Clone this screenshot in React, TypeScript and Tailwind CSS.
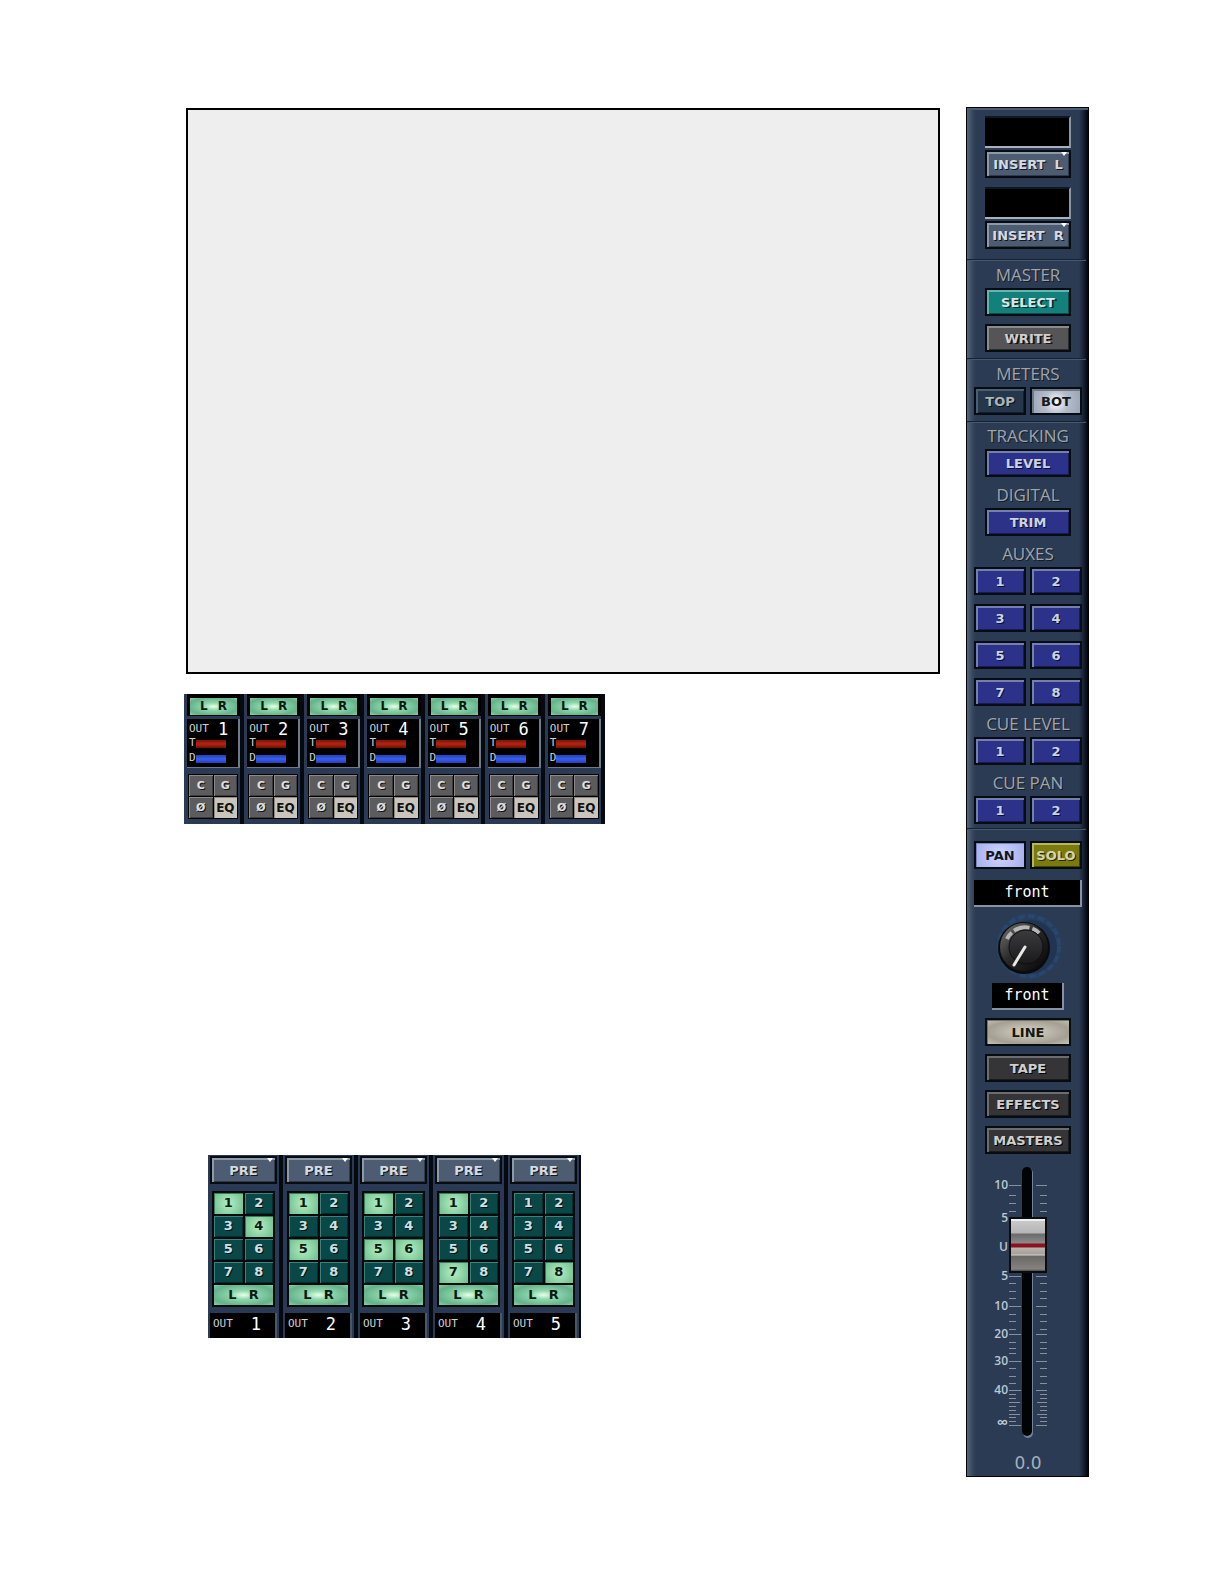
import type { ReactNode } from 'react';

const tones = {
  steel:
    'bg-[#4d5c70] text-[#d5dae0] shadow-[inset_2px_2px_0_#8d99a8,inset_-1px_-1px_0_#2f3a4a] [text-shadow:1px_1px_0_#10161f]',
  teal: 'bg-[#13807c] text-[#d8e6e4] shadow-[inset_2px_2px_0_#63b5ad,inset_-1px_-1px_0_#0a4c4a] [text-shadow:2px_1px_0_#06302f]',
  gray: 'bg-[#555557] text-[#cfcfcf] shadow-[inset_2px_2px_0_#8b8b8b,inset_-1px_-1px_0_#2c2c2c] [text-shadow:2px_1px_0_#151515]',
  navy: 'bg-[#26374b] text-[#aab4bb] shadow-[inset_2px_2px_0_#4b6075,inset_-1px_-1px_0_#151f2c] [text-shadow:1px_1px_0_#0a0f16]',
  silver:
    'bg-[radial-gradient(circle_at_50%_55%,#ffffff,#b4bccb_45%,#98a2b4)] text-[#15181d] shadow-[inset_2px_2px_0_#6d7888]',
  blue: 'bg-[#2c3189] text-[#ccd3e0] shadow-[inset_2px_2px_0_#7380ab,inset_-1px_-1px_0_#181a52] [text-shadow:1px_1px_0_#0b0d33]',
  lilac: 'bg-[radial-gradient(circle,#cfd6ff,#a5aeec)] text-[#14161f] shadow-[inset_1px_1px_0_#7a83b8]',
  olive:
    'bg-[#7b7b0b] text-[#d3d3b4] shadow-[inset_2px_2px_0_#b5b660,inset_-1px_-1px_0_#454503] [text-shadow:1px_1px_0_#26260a]',
  sand: 'bg-[radial-gradient(ellipse_at_50%_50%,#d8d4c6,#a39f93_70%,#c6c2b5)] text-[#17170f] shadow-[inset_1px_1px_0_#77746a]',
  dark: 'bg-[#353537] text-[#cfcfcf] shadow-[inset_2px_2px_0_#6b6d70,inset_-1px_-1px_0_#1a1a1a] [text-shadow:1px_1px_0_#000]',
};

type Tone = keyof typeof tones;

function StripButton({ tone, children, arrow }: { tone: Tone; children: ReactNode; arrow?: boolean }) {
  return (
    <button
      type="button"
      className={`relative h-7 w-full border-2 border-[#070b12] text-[13px] leading-[25px] font-bold whitespace-pre ${tones[tone]}`}
    >
      {children}
      {arrow && (
        <span className="absolute top-0 right-0.5 border-x-[3px] border-t-4 border-x-transparent border-t-white" />
      )}
    </button>
  );
}

function Wide({ children }: { children: ReactNode }) {
  return <div className="mx-[11px] flex flex-col">{children}</div>;
}

function Pair({ children }: { children: ReactNode }) {
  return <div className="grid grid-cols-2 gap-1">{children}</div>;
}

function Heading({ children }: { children: ReactNode }) {
  return (
    <h2 className="h-[22px] text-center font-['Open_Sans',sans-serif] text-[17px] leading-[18px] whitespace-nowrap text-[#a0a5aa] [text-shadow:1px_1px_0_#141c28]">
      {children}
    </h2>
  );
}

function Divider() {
  return <div className="-mr-1 -ml-[7px] h-0.5 border-t border-b border-t-[#172231] border-b-[#46586d]" />;
}

function InsertSlot() {
  return <div className="mb-0.5 h-8 border-t-2 border-r-2 border-b-2 border-t-[#101722] border-r-[#8b96a5] border-b-[#a9b1bc] bg-black" />;
}

function Knob() {
  return (
    <div className="relative mx-auto mt-[5px] size-[70px]">
      <svg viewBox="0 0 70 70" className="size-full">
        <defs>
          <linearGradient id="knobRim" x1="0" y1="0" x2="1" y2="1">
            <stop offset="0" stopColor="#777" />
            <stop offset="0.45" stopColor="#2a2a2a" />
            <stop offset="1" stopColor="#050505" />
          </linearGradient>
          <linearGradient id="knobCap" x1="0" y1="0" x2="0" y2="1">
            <stop offset="0" stopColor="#3b3b3d" />
            <stop offset="1" stopColor="#1a1a1b" />
          </linearGradient>
        </defs>
        <circle cx="36" cy="34" r="33" fill="#27405f" opacity="0.7" />
        <circle cx="36" cy="34" r="30" fill="none" stroke="#2c4a75" strokeWidth="4" strokeDasharray="7 3" opacity="0.7" />
        <circle cx="37" cy="35" r="27" fill="#22334d" opacity="0.8" />
        <circle cx="31" cy="36" r="26" fill="#0a0b0d" />
        <circle cx="31" cy="35" r="24" fill="url(#knobRim)" />
        <path d="M14 27a20 20 0 0 1 33-5" fill="none" stroke="#b5b5b5" strokeWidth="4" strokeDasharray="8 3 16 3" />
        <circle cx="33" cy="35" r="17" fill="url(#knobCap)" stroke="#0d0d0d" strokeWidth="1" />
        <path d="M32 35L21 53" stroke="#e9e9e9" strokeWidth="3" strokeLinecap="round" />
      </svg>
      <input
        type="range"
        aria-label="Pan position"
        min={-100}
        max={100}
        defaultValue={-60}
        className="absolute inset-0 size-full opacity-0"
      />
    </div>
  );
}

const majorTicks = [18, 109, 139, 167, 194, 223, 258];
const minorTicks = [28, 36, 44, 116, 124, 131, 147, 154, 162, 175, 181, 186, 201, 209, 216, 227, 231, 239, 243, 250, 254];
const midTicks = [235, 247];

const scaleLabels = [
  { text: '10', y: 18 },
  { text: '5', y: 51 },
  { text: 'U', y: 80 },
  { text: '5', y: 109 },
  { text: '10', y: 139 },
  { text: '20', y: 167 },
  { text: '30', y: 194 },
  { text: '40', y: 223 },
  { text: '∞', y: 257 },
];

function Fader() {
  return (
    <div className="relative mt-[13px] h-[271px]">
      <svg viewBox="0 0 108 271" className="h-full w-full">
        <g stroke="#84909a" strokeWidth="1" shapeRendering="crispEdges">
          {majorTicks.map((y) => (
            <path key={y} d={`M35 ${y + 0.5}H47M62 ${y + 0.5}H73`} />
          ))}
          {midTicks.map((y) => (
            <path key={y} d={`M35 ${y + 0.5}H46M63 ${y + 0.5}H73`} />
          ))}
          {minorTicks.map((y) => (
            <path key={y} d={`M35 ${y + 0.5}H42M66 ${y + 0.5}H73`} />
          ))}
        </g>
        <g className="fill-[#bcc8d2] text-[12px] font-semibold" fontFamily="Open Sans, sans-serif" textAnchor="end">
          {scaleLabels.map(({ text, y }) => (
            <text key={y} x="34" y={y + 4} className={text === '∞' ? 'text-base' : undefined}>
              {text}
            </text>
          ))}
        </g>
        <rect x="49" y="1" width="10" height="270" rx="5" fill="#73839a" />
        <rect x="48" y="0" width="10" height="269" rx="5" fill="#020305" />
      </svg>
      <input
        type="range"
        aria-label="Master level"
        min={0}
        max={215}
        defaultValue={165}
        className="absolute top-0 left-[35px] h-full w-[38px] appearance-none bg-transparent [direction:rtl] [writing-mode:vertical-lr] [&::-webkit-slider-thumb]:h-14 [&::-webkit-slider-thumb]:w-[38px] [&::-webkit-slider-thumb]:appearance-none [&::-webkit-slider-thumb]:border-2 [&::-webkit-slider-thumb]:border-[#0b0c0e] [&::-webkit-slider-thumb]:bg-[linear-gradient(#efefef_0_2px,#c9c9c9_2px,#b5b5b5_14px,#6b6b6b_15px,#8a8a8a_24px,#8f1020_25px_28px,#b9b5ac_29px,#a5a19a_35px,#d5d5d5_36px,#6a6865_37px,#858380_50px,#4a4a4a_52px)]"
      />
    </div>
  );
}

function Readout({ className, children }: { className: string; children: ReactNode }) {
  return (
    <p
      className={`h-[27px] border-r-2 border-b-2 border-[#8792a3] bg-black text-center font-['DejaVu_Sans_Mono',monospace] text-[15px] leading-6 text-white ${className}`}
    >
      {children}
    </p>
  );
}

function MasterStrip() {
  return (
    <aside className="w-[123px] shrink-0 border border-black bg-[linear-gradient(90deg,#55677b_0,#33445c_6px,#2b3b54_9px,#2b3b54_112px,#141e2f_117px,#02040a_121px)] pt-2 pr-[6px] pb-0.5 pl-[7px] shadow-[inset_0_2px_0_#4b5d73]">
      <Wide>
        <InsertSlot />
        <StripButton tone="steel" arrow>{'INSERT  L'}</StripButton>
        <div className="h-[9px]" />
        <InsertSlot />
        <StripButton tone="steel" arrow>{'INSERT  R'}</StripButton>
      </Wide>
      <div className="h-2.5" />
      <Divider />

      <div className="pt-[5px] pb-1.5">
        <Heading>MASTER</Heading>
        <div className="mx-[11px] flex flex-col gap-2">
          <StripButton tone="teal">SELECT</StripButton>
          <StripButton tone="gray">WRITE</StripButton>
        </div>
      </div>
      <Divider />

      <div className="pt-[5px] pb-1.5">
        <Heading>METERS</Heading>
        <Pair>
          <StripButton tone="navy">TOP</StripButton>
          <StripButton tone="silver">BOT</StripButton>
        </Pair>
      </div>
      <Divider />

      <div className="flex flex-col gap-[9px] pt-1 pb-1">
        <div>
          <Heading>TRACKING</Heading>
          <Wide>
            <StripButton tone="blue">LEVEL</StripButton>
          </Wide>
        </div>
        <div>
          <Heading>DIGITAL</Heading>
          <Wide>
            <StripButton tone="blue">TRIM</StripButton>
          </Wide>
        </div>
        <div>
          <Heading>AUXES</Heading>
          <div className="grid grid-cols-2 gap-x-1 gap-y-[9px]">
            {[1, 2, 3, 4, 5, 6, 7, 8].map((n) => (
              <StripButton key={n} tone="blue">{n}</StripButton>
            ))}
          </div>
        </div>
        {['CUE LEVEL', 'CUE PAN'].map((name) => (
          <div key={name}>
            <Heading>{name}</Heading>
            <Pair>
              <StripButton tone="blue">1</StripButton>
              <StripButton tone="blue">2</StripButton>
            </Pair>
          </div>
        ))}
      </div>
      <Divider />

      <div className="pt-[11px]">
        <Pair>
          <StripButton tone="lilac">PAN</StripButton>
          <StripButton tone="olive">SOLO</StripButton>
        </Pair>
        <Readout className="mt-[11px]">front</Readout>
        <Knob />
        <Readout className="mx-[18px] mt-px">front</Readout>
        <div className="mx-[11px] mt-2 flex flex-col gap-2">
          <StripButton tone="sand">LINE</StripButton>
          <StripButton tone="dark">TAPE</StripButton>
          <StripButton tone="dark">EFFECTS</StripButton>
          <StripButton tone="dark">MASTERS</StripButton>
        </div>
        <Fader />
        <p className="mt-3.5 text-center text-[17px] leading-[22px] text-[#a3b0bd]">0.0</p>
      </div>
    </aside>
  );
}

function LeftRight({ className }: { className: string }) {
  return (
    <button
      type="button"
      className={`flex items-center justify-center bg-[radial-gradient(ellipse_at_50%_50%,#e8ffe9,#8fd8ac_30%,#64b28b_75%,#86cfa2)] font-bold text-[#0c1a14] ${className}`}
    >
      <span>L</span>
      <span>R</span>
    </button>
  );
}

function OutLabel({ n, className }: { n: number; className: string }) {
  return (
    <div className={`flex items-center justify-between font-['DejaVu_Sans_Mono',monospace] leading-[18px] ${className}`}>
      <span className="text-[11px] text-[#d0d0d0]">OUT</span>
      <span className="text-[17px] text-white">{n}</span>
    </div>
  );
}

const smallKey =
  'h-[21px] bg-[#5c5c5e] text-[11px] leading-[21px] font-bold text-[#e0e0e0] shadow-[inset_1px_1px_0_#8b8b8b,inset_-1px_-1px_0_#3c3c3c] [text-shadow:1px_1px_0_#111]';

function MeterChannel({ n }: { n: number }) {
  return (
    <div className="border-r-4 border-[#050910] bg-[#2a3a55] pb-[5px] pl-[3px]">
      <div className="bg-black px-[3px] pt-1 pb-px">
        <LeftRight className="h-[17px] w-full gap-2.5 text-xs" />
      </div>
      <div className="mt-[3px] h-[49px] border-r-2 border-b border-[#6f7987] bg-black pt-px pl-0.5 font-['DejaVu_Sans_Mono',monospace]">
        <OutLabel n={n} className="pr-2.5" />
        <div className="mt-px flex h-2.5 items-center text-[11px] text-[#d0d0d0]">
          <span>T</span>
          <div className="h-2 w-[30px] bg-[linear-gradient(#7a1408,#b52410,#6a1006)]" />
        </div>
        <div className="mt-[5px] flex h-2.5 items-center text-[11px] text-[#d0d0d0]">
          <span>D</span>
          <div className="h-2 w-[30px] bg-[linear-gradient(#2440b0,#3a5ef0,#2440b8)]" />
        </div>
      </div>
      <div className="mt-1.5 mr-0.5 ml-px grid grid-cols-2 gap-px border border-black bg-black">
        <button type="button" className={smallKey}>C</button>
        <button type="button" className={smallKey}>G</button>
        <button type="button" className={smallKey}>Ø</button>
        <button
          type="button"
          className="h-[21px] bg-[#c9c5bc] text-xs leading-[22px] font-bold text-[#111] shadow-[inset_1px_1px_0_#8d8a83]"
        >
          EQ
        </button>
      </div>
    </div>
  );
}

function BusChannel({ n, active }: { n: number; active: number[] }) {
  return (
    <div className="w-[75px] shrink-0 border-r-4 border-[#050910] bg-[#2a3a55] pt-px pl-0.5">
      <div className="mr-0.5">
        <StripButton tone="steel" arrow>PRE</StripButton>
      </div>
      <div className="mt-[7px] mr-1 ml-0.5 bg-[#04090c] p-0.5">
        <div className="grid grid-cols-2 gap-0.5">
          {[1, 2, 3, 4, 5, 6, 7, 8].map((bus) => (
            <button
              key={bus}
              type="button"
              className={`h-[21px] text-[13px] leading-5 font-bold ${
                active.includes(bus)
                  ? 'bg-[radial-gradient(circle,#b5efc2,#6cbd8d)] text-[#0c1a14] shadow-[inset_1px_1px_0_#3c7a5c]'
                  : 'bg-[#0a4747] text-[#cfe0e4] shadow-[inset_1px_1px_0_#3f7f7c,inset_-1px_-1px_0_#062c2d] [text-shadow:1px_1px_0_#011]'
              }`}
            >
              {bus}
            </button>
          ))}
        </div>
        <LeftRight className="mt-0.5 h-5 w-full gap-3 text-[13px]" />
      </div>
      <div className="mt-1.5 mr-0.5 h-[25px] border-r-2 border-[#4c5766] bg-black pt-0.5">
        <OutLabel n={n} className="pr-3.5 pl-[3px]" />
      </div>
    </div>
  );
}

const busChannels = [
  { n: 1, active: [1, 4] },
  { n: 2, active: [1, 5] },
  { n: 3, active: [1, 5, 6] },
  { n: 4, active: [1, 7] },
  { n: 5, active: [8] },
];

export default function App() {
  return (
    <main className="flex min-h-screen items-start gap-[26px] bg-white pt-[107px] pr-[135px] pb-[107px] pl-[184px] font-['DejaVu_Sans',sans-serif]">
      <div className="min-w-0 flex-1">
        <section className="mt-px ml-0.5 aspect-[4/3] border-2 border-black bg-[#eeeeee]" />

        <section className="mt-5 grid w-[421px] grid-cols-7 bg-[#050910]">
          {[1, 2, 3, 4, 5, 6, 7].map((n) => (
            <MeterChannel key={n} n={n} />
          ))}
        </section>

        <section className="mt-[331px] ml-6 flex w-[373px] overflow-hidden">
          {busChannels.map((ch) => (
            <BusChannel key={ch.n} n={ch.n} active={ch.active} />
          ))}
        </section>
      </div>

      <MasterStrip />
    </main>
  );
}
